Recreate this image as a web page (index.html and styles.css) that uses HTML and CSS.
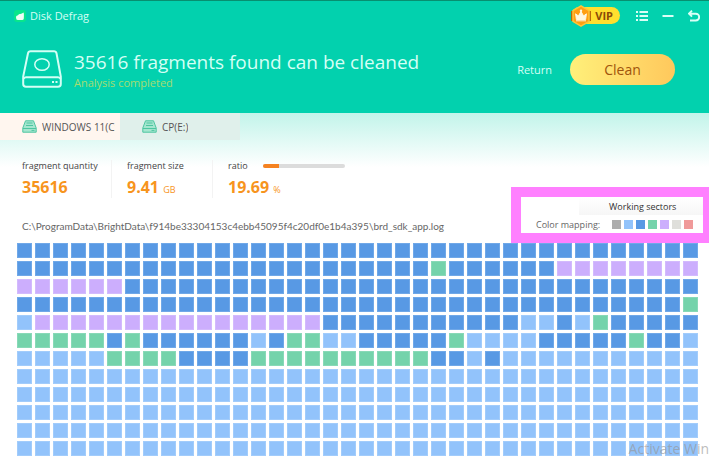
FILE: index.html
```html
<!DOCTYPE html>
<html lang="en">
<head>
  <meta charset="UTF-8" />
  <meta name="viewport" content="width=device-width, initial-scale=1.0" />
  <title>Disk Defrag</title>
  <link rel="stylesheet" href="styles.css">
</head>
<body>
<header class="header">
  <div class="titlebar">
    <svg class="app-icon" viewBox="0 0 12 12">
      <rect width="12" height="12" rx="3" fill="#08e68c"/>
      <path d="M2 7.500C2 5.500 3.300 5.600 4 5.300C5 3.300 7.400 4.500 9.500 2.500C10 3.500 10 5 9.800 8.500Q9.600 10 8.200 10H3.700Q2 10 2 7.500Z" fill="#effff6"/>
    </svg>
    <span class="app-name">Disk Defrag</span>
    <button class="vip" type="button">
      <svg class="vip-badge" viewBox="0 0 20 22">
        <path d="M0 6H20V16H0Z" fill="#b86a0c"/>
        <path d="M10 .8L18 5.600V16.400L10 21.200L2 16.400V5.600Z" fill="#ff9f12" stroke="#ffc53a" stroke-width="1.500" stroke-linejoin="round"/>
        <path d="M4.600 8.800L7.400 11L10 6.500L12.600 11L15.400 8.800L14.600 14.500H5.400Z" fill="#fff8e0" stroke="#fff8e0" stroke-linejoin="round"/>
        <circle cx="10" cy="5.700" r="1.200" fill="#fff8e0"/>
        <path d="M5 15.800H15" stroke="#fff8e0"/>
      </svg>
      <span>VIP</span>
    </button>
    <button class="win-btn" type="button" aria-label="Menu">
      <svg viewBox="0 0 12 10" width="12" height="10">
        <path d="M0 1H2M0 5H2M0 9H2M3.500 1H12M3.500 5H12M3.500 9H12" stroke="#d9fff6" stroke-width="2" fill="none"/>
      </svg>
    </button>
    <button class="win-btn" type="button" aria-label="Minimize">
      <svg viewBox="0 0 12 10" width="12" height="10"><path d="M.5 5H11.500" stroke="#d9fff6" stroke-width="2"/></svg>
    </button>
    <button class="win-btn" type="button" aria-label="Back">
      <svg viewBox="0 0 12 12" width="12" height="12">
        <path d="M4 .7L1 3.700L4 6.700M1 3.700H7.800A3.400 3.400 0 0 1 7.800 10.500H2" stroke="#d9fff6" stroke-width="1.900" fill="none"/>
      </svg>
    </button>
  </div>

  <div class="summary">
    <svg class="drive" viewBox="0 0 40 38">
      <g fill="none" stroke="#d4fff5" stroke-width="2">
        <path d="M8.500 1.200H32Q34 1.200 34.500 3.200L38.800 26.500V34Q38.800 36.800 36 36.800H4Q1.200 36.800 1.200 34V26.500L6 3.200Q6.500 1.200 8.500 1.200Z"/>
        <path d="M1.500 29Q2 27.200 4 27.200H36Q38 27.200 38.500 29"/>
        <ellipse cx="20" cy="14.500" rx="7.200" ry="5.800" stroke-width="1.500"/>
      </g>
      <path d="M30 32H32M33.500 32H35.500" stroke="#d4fff5" stroke-width="2"/>
    </svg>
    <div class="summary-text">
      <h1>35616 fragments found can be cleaned</h1>
      <p>Analysis completed</p>
    </div>
    <a class="return" href="#">Return</a>
    <button class="clean" type="button">Clean</button>
  </div>
</header>

<main class="content">
  <nav class="tabs">
    <button class="tab active" type="button">
      <svg viewBox="0 0 15 13" width="15" height="13">
        <path d="M3.500 .8H11.500L14.200 8V12.200H.8V8Z" fill="#a5e6cf" stroke="#4ec5a0" stroke-linejoin="round"/>
        <path d="M1 8.500H14M4.500 3H10.500M4 5.500H11M9.500 10.400H12.500" stroke="#4ec5a0"/>
      </svg>
      <span>WINDOWS 11(C:)</span>
    </button>
    <button class="tab" type="button">
      <svg viewBox="0 0 15 13" width="15" height="13">
        <path d="M3.500 .8H11.500L14.200 8V12.200H.8V8Z" fill="#a5e6cf" stroke="#4ec5a0" stroke-linejoin="round"/>
        <path d="M1 8.500H14M4.500 3H10.500M4 5.500H11M9.500 10.400H12.500" stroke="#4ec5a0"/>
      </svg>
      <span>CP(E:)</span>
    </button>
  </nav>

  <div class="info">
    <div class="info-left">
      <div class="stats">
        <div class="stat">
          <div class="label">fragment quantity</div>
          <div class="value">35616</div>
        </div>
        <div class="stat">
          <div class="label">fragment size</div>
          <div class="value">9.41 <small>GB</small></div>
        </div>
        <div class="stat">
          <div class="label">ratio <span class="bar"><span class="bar-fill" style="width:19.69%"></span></span></div>
          <div class="value">19.69 <small>%</small></div>
        </div>
      </div>
      <div class="path">C:\ProgramData\BrightData\f914be33304153c4ebb45095f4c20df0e1b4a395\brd_sdk_app.log</div>
    </div>
    <div class="legend">
      <div class="tip">Working sectors</div>
      <div class="mapping">
        <span>Color mapping:</span>
        <i class="gray"></i><i class="light"></i><i class="blue"></i><i class="green"></i><i class="purple"></i><i class="pale"></i><i class="red"></i>
      </div>
    </div>
  </div>

  <div class="sectors" id="sectors"></div>
</main>
<div class="watermark">Activate Win</div>

<script>
/* one string per row: b = working, p = purple, g = green, l = light blue */
const rows = [
  'b'.repeat(38),
  'b'.repeat(23) + 'g' + 'b'.repeat(6) + 'p'.repeat(8),
  'p'.repeat(6) + 'b'.repeat(32),
  'b'.repeat(37) + 'g',
  'l' + 'p'.repeat(16) + 'b'.repeat(11) + 'llblg' + 'b'.repeat(5),
  'gggggbgbbbbbblbggllbbbbbgllllbbbbbgbbl',
  'lllllggggbbbb' + 'g'.repeat(10) + 'bblb' + 'l'.repeat(11)
];
while(rows.length < 12) rows.push('l'.repeat(38));

const names = {b:'blue', p:'purple', g:'green', l:'light'};
document.getElementById('sectors').innerHTML =
  rows.join('').split('').map(c => `<i class="${names[c]}"></i>`).join('');
</script>
</body>
</html>
```
FILE: styles.css
```css
*{box-sizing:border-box;}
html,body{margin:0;padding:0;background:#fff;color:#555;font-family:"Open Sans","Noto Sans",sans-serif;}
body{position:relative;min-height:100vh;overflow:hidden;}
button{border:none;background:none;padding:0;font-family:inherit;cursor:pointer;}
h1,p{margin:0;font-weight:normal;}
svg{display:block;flex:none;}

.header{background:#02d1ae;border-top:1px solid #078f70;height:113px;}
.titlebar{display:flex;align-items:center;height:29px;padding:0 9px 0 14px;}
.app-icon{width:12px;height:12px;margin-right:4px;}
.app-name{flex:1;font-size:11px;color:#d4fff5;}
.vip{display:flex;align-items:center;gap:4px;height:17px;padding-right:7px;margin-right:16px;border-radius:9px;background:#ffdf2e;color:#8a4a08;font-size:11px;font-weight:bold;}
.vip-badge{width:20px;height:22px;}
.win-btn{width:12px;margin-left:14px;}
.vip + .win-btn{margin-left:0;}

.summary{display:flex;align-items:center;padding:16px 34px 0 22px;}
.drive{width:40px;height:38px;margin-right:12px;}
.summary-text{flex:1;color:#d4fff5;}
.summary-text h1{padding-top:4px;font-size:19px;line-height:24px;}
.summary-text p{font-size:11px;line-height:18px;color:#a5dc70;}
.return{font-size:11px;color:#d4fff5;text-decoration:none;margin-right:18px;}
.clean{width:105px;height:31px;border-radius:16px;background:linear-gradient(90deg,#fff07a,#ffc85c);color:#a0540c;font-size:14px;}

.content{background:linear-gradient(#c2f4ea,#fff 54px);}
.tabs{display:flex;}
.tab{display:flex;align-items:center;gap:5px;width:120px;height:27px;padding:0 5px 0 22px;background:#e0f0eb;color:#555;font-size:10px;}
.tab.active{background:#fff6ef;}
.tab span{overflow:hidden;white-space:nowrap;}

.info{display:flex;justify-content:space-between;align-items:flex-end;height:103px;}
.info-left{padding-left:22px;}
.stats{display:grid;grid-template-columns:90px 86px auto;gap:15px;}
.stat{height:38px;border-right:1px solid #f3f3f3;white-space:nowrap;}
.stat:last-child{border:none;}
.label{display:flex;align-items:center;font-size:9px;line-height:12px;color:#444;}
.bar{width:82px;height:4px;margin-left:15px;border-radius:2px;background:#dcdcdc;overflow:hidden;}
.bar-fill{display:block;height:4px;background:#f58220;}
.value{font-size:16px;line-height:30px;font-weight:bold;color:#f7941d;}
.value small{font-size:9px;font-weight:normal;}
.path{margin-top:20px;padding-bottom:9px;font-family:Lato,sans-serif;font-size:10px;line-height:16px;white-space:nowrap;color:#666;}

.legend{width:198px;height:56px;border:10px solid #ff80ff;border-right-width:6px;background:#fff;}
.tip{height:18px;margin-left:58px;padding-left:30px;background:linear-gradient(#fff,#f6f6f6);font-size:9px;line-height:20px;color:#333;white-space:nowrap;}
.mapping{display:flex;align-items:center;gap:3px;height:18px;padding-left:15px;font-size:9px;color:#666;white-space:nowrap;}
.mapping span{flex:1;}
.mapping i{width:9px;height:9px;}
.mapping i:last-child{margin-right:10px;}

.sectors{display:grid;grid-template-columns:repeat(38,1fr);gap:3px;padding:0 11px 0 17px;}
.sectors i{aspect-ratio:1;border:1px solid rgba(255,255,255,.15);}

.gray{background:#adadad;}
.light{background:#92c3fb;}
.blue{background:#5899e4;}
.green{background:#74d3ab;}
.purple{background:#ccaefd;}
.pale{background:#dfdfdb;}
.red{background:#f09a9a;}

.watermark{position:absolute;right:0;top:439px;font-size:14px;line-height:20px;color:rgba(150,150,150,.65);white-space:nowrap;}
```
